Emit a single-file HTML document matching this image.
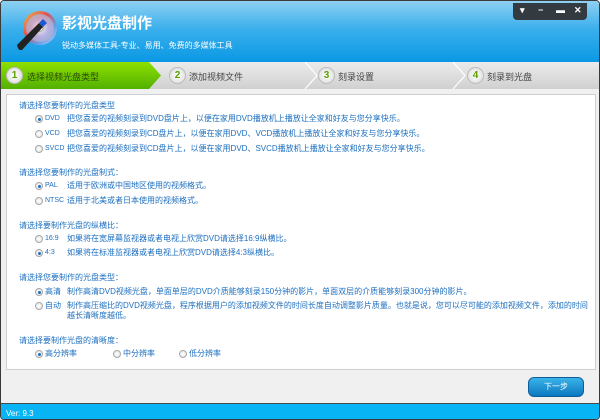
<!DOCTYPE html>
<html><head><meta charset="utf-8"><style>
*{margin:0;padding:0;box-sizing:border-box}
body{width:600px;height:420px;overflow:hidden;background:#fff;font-family:"Liberation Sans","Noto Sans CJK SC",sans-serif;position:relative}
.win{position:absolute;left:0;top:0;width:600px;height:420px;border:1px solid #3a3a3a;border-radius:4px;background:#f0f0f0;overflow:hidden}
.hdr{position:absolute;left:0;top:0;width:600px;height:61px;background:linear-gradient(#8fd0f2,#3bb0ec 45%,#0a98e4)}
.t1{position:absolute;left:61px;top:11px;color:#fff;font-size:15px;font-weight:bold}
.t2{position:absolute;left:61px;top:39px;color:#fff;font-size:8px}
.ctl{position:absolute;left:512px;top:2px;width:74px;height:17px;background:#333a40;border-radius:0 0 4px 4px;color:#fff;font-size:9px;font-weight:bold}
.ctl span{position:absolute;top:2px}
.steps{position:absolute;left:0;top:61px;width:600px;height:27px;background:linear-gradient(#ececec,#d0d0d0)}
.green{position:absolute;left:0;top:0;height:27px;width:160px;background:linear-gradient(#8ee000,#52b000);clip-path:polygon(0 0,148px 0,160px 13.5px,148px 27px,0 27px)}
.num{position:absolute;top:5px;width:17px;height:17px;border-radius:50%;background:radial-gradient(#fff,#d8d8d8);border:1px solid #bbb;color:#5aa000;font-size:10px;font-weight:bold;text-align:center;line-height:15px}
.lab{position:absolute;top:8px;font-size:9px;color:#444}
.chev{position:absolute;top:0;width:14px;height:27px}
.panel{position:absolute;left:5px;top:93px;width:590px;height:276px;background:#fff;border:1px solid #cfcfcf}
.t{position:absolute;font-size:8px;color:#1c6fc0;white-space:nowrap;line-height:10px}
.t.s{font-size:7px}
.r{position:absolute;width:8px;height:8px;border-radius:50%;border:1px solid #a8a8a8;background:radial-gradient(#fff,#e0e0e0)}
.r.on::after{content:"";position:absolute;left:1.5px;top:1.5px;width:3px;height:3px;border-radius:50%;background:#1c6fc0}
.btn{position:absolute;left:527px;top:376px;width:56px;height:20px;border-radius:6px;background:linear-gradient(#3bb4ea,#0b78c0);border:1px solid #0a5e9a;color:#fff;font-size:8px;text-align:center;line-height:18px}
.foot{position:absolute;left:0;top:402px;width:600px;height:18px;background:#08b4f4;border-top:1px solid #4a4a4a;color:#fff;font-size:8px;padding:5px 5px}
</style></head><body><div class="win">
<div class="hdr">
<svg style="position:absolute;left:12px;top:8px" width="46" height="44" viewBox="0 0 46 44">
<defs><radialGradient id="cd"><stop offset="0.15" stop-color="#fff"/><stop offset="0.2" stop-color="#999"/><stop offset="0.3" stop-color="#e8e8f0"/><stop offset="0.6" stop-color="#c8b8e8"/><stop offset="1" stop-color="#b0b0c8"/></radialGradient>
<linearGradient id="rb" x1="0" y1="0" x2="1" y2="1"><stop offset="0" stop-color="#f0c040"/><stop offset=".4" stop-color="#e05050"/><stop offset=".7" stop-color="#60a0f0"/><stop offset="1" stop-color="#d0d0f0"/></linearGradient></defs>
<circle cx="27" cy="19" r="17" fill="url(#rb)"/><circle cx="27" cy="19" r="14" fill="url(#cd)" opacity=".8"/><circle cx="27" cy="19" r="3" fill="#fff" stroke="#888" stroke-width=".5"/>
<path d="M4 36 L26 14 L30 18 L9 41 Q5 42 4 36Z" fill="#222"/><path d="M26 14 L30 10 L34 14 L30 18Z" fill="#1a5ad0"/>
</svg>
<div class="t1">影视光盘制作</div>
<div class="t2">锐动多媒体工具-专业、易用、免费的多媒体工具</div>
<div class="ctl"><span style="left:7px">▾</span><span style="left:25px">−</span><span style="left:43px">▬</span><span style="left:61px">✕</span></div>
</div>
<div class="steps">
<div class="green"></div>
<svg class="chev" style="left:303px" viewBox="0 0 14 27"><path d="M1 0 L13 13.5 L1 27" fill="none" stroke="#fff" stroke-width="1.2"/></svg>
<svg class="chev" style="left:451px" viewBox="0 0 14 27"><path d="M1 0 L13 13.5 L1 27" fill="none" stroke="#fff" stroke-width="1.2"/></svg>
<div class="num" style="left:5px">1</div><div class="lab" style="left:26px;color:#2a4a00">选择视频光盘类型</div>
<div class="num" style="left:168px">2</div><div class="lab" style="left:188px">添加视频文件</div>
<div class="num" style="left:317px">3</div><div class="lab" style="left:337px">刻录设置</div>
<div class="num" style="left:466px">4</div><div class="lab" style="left:486px">刻录到光盘</div>
</div>
<div class="panel"></div>
<div class="t" style="left:18px;top:100px">请选择您要制作的光盘类型</div>
<div class="r on" style="left:34px;top:114px"></div><div class="t s" style="left:44px;top:113px">DVD</div><div class="t" style="left:66px;top:113px">把您喜爱的视频刻录到DVD盘片上，以便在家用DVD播放机上播放让全家和好友与您分享快乐。</div>
<div class="r" style="left:34px;top:129px"></div><div class="t s" style="left:44px;top:128px">VCD</div><div class="t" style="left:66px;top:128px">把您喜爱的视频刻录到CD盘片上，以便在家用DVD、VCD播放机上播放让全家和好友与您分享快乐。</div>
<div class="r" style="left:34px;top:144px"></div><div class="t s" style="left:44px;top:143px">SVCD</div><div class="t" style="left:66px;top:143px">把您喜爱的视频刻录到CD盘片上，以便在家用DVD、SVCD播放机上播放让全家和好友与您分享快乐。</div>
<div class="t" style="left:18px;top:167px">请选择您要制作的光盘制式：</div>
<div class="r on" style="left:34px;top:181px"></div><div class="t s" style="left:44px;top:180px">PAL</div><div class="t" style="left:66px;top:180px">适用于欧洲或中国地区使用的视频格式。</div>
<div class="r" style="left:34px;top:196px"></div><div class="t s" style="left:44px;top:195px">NTSC</div><div class="t" style="left:66px;top:195px">适用于北美或者日本使用的视频格式。</div>
<div class="t" style="left:18px;top:220px">请选择要制作光盘的纵横比：</div>
<div class="r" style="left:34px;top:234px"></div><div class="t s" style="left:44px;top:233px">16:9</div><div class="t" style="left:66px;top:233px">如果将在宽屏幕监视器或者电视上欣赏DVD请选择16:9纵横比。</div>
<div class="r on" style="left:34px;top:248px"></div><div class="t s" style="left:44px;top:247px">4:3</div><div class="t" style="left:66px;top:247px">如果将在标准监视器或者电视上欣赏DVD请选择4:3纵横比。</div>
<div class="t" style="left:18px;top:272px">请选择您要制作的光盘类型：</div>
<div class="r on" style="left:34px;top:287px"></div><div class="t" style="left:44px;top:286px">高清</div><div class="t" style="left:66px;top:286px">制作高清DVD视频光盘，单面单层的DVD介质能够刻录150分钟的影片，单面双层的介质能够刻录300分钟的影片。</div>
<div class="r" style="left:34px;top:301px"></div><div class="t" style="left:44px;top:300px">自动</div><div class="t" style="left:66px;top:300px;white-space:normal;width:524px">制作高压缩比的DVD视频光盘，程序根据用户的添加视频文件的时间长度自动调整影片质量。也就是说，您可以尽可能的添加视频文件，添加的时间越长清晰度越低。</div>
<div class="t" style="left:18px;top:335px">请选择要制作光盘的清晰度：</div>
<div class="r on" style="left:34px;top:349px"></div><div class="t" style="left:44px;top:348px">高分辨率</div>
<div class="r" style="left:112px;top:349px"></div><div class="t" style="left:122px;top:348px">中分辨率</div>
<div class="r" style="left:178px;top:349px"></div><div class="t" style="left:188px;top:348px">低分辨率</div>
<div class="btn">下一步</div>
<div class="foot">Ver: 9.3</div>
</div></body></html>
